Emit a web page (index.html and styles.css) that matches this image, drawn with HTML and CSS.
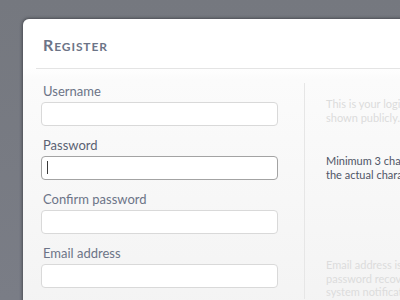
FILE: index.html
```html
<!DOCTYPE html>
<html>
<head>
<meta charset="utf-8">
<link rel="stylesheet" href="styles.css">
</head>
<body>
<div class="card">
  <h1 class="title"><span class="cap">R</span>egister</h1>
  <form class="form">
    <div class="field">
      <label class="label">Username</label>
      <input class="input" type="text">
    </div>
    <p class="help help-user">This is your login name and it will be<br>shown publicly.</p>

    <div class="field">
      <label class="label label-dark">Password</label>
      <div class="input-wrap">
        <input class="input input-focus" type="password">
        <span class="caret"></span>
      </div>
    </div>
    <p class="help help-dark help-pass">Minimum 3 characters. Only<br>the actual characters count.</p>

    <div class="field">
      <label class="label">Confirm password</label>
      <input class="input" type="password">
    </div>
    <p class="help"></p>

    <div class="field">
      <label class="label">Email address</label>
      <input class="input" type="text">
    </div>
    <p class="help help-mail">Email address is used for<br>password recovery and<br>system notifications.</p>
  </form>
</div>
</body>
</html>
```

FILE: styles.css
```css
html, body {
  margin: 0;
  padding: 0;
  height: 100%;
  overflow: hidden;
}
body {
  background: linear-gradient(#75787f, #7a7d86);
  font-family: Lato, "Open Sans", sans-serif;
}
.card {
  margin: 19px 0 0 23px;
  width: 520px;
  min-height: 340px;
  border-radius: 6px 0 0 0;
  background: linear-gradient(#ffffff 0px, #ffffff 48px, #fbfbfb 60px, #f3f3f3 300px);
  box-shadow: 0 0 3px 1px rgba(40, 42, 48, 0.55);
}
.title {
  margin: 0 0 0 13px;
  padding: 17px 0 12px 7px;
  border-bottom: 1px solid #e4e4e4;
  font-size: 12px;
  line-height: 18px;
  font-weight: 700;
  text-transform: uppercase;
  letter-spacing: 0.9px;
  color: #6c7487;
}
.cap {
  font-size: 16px;
}
.form {
  display: grid;
  grid-template-columns: 281px 1fr;
  padding-top: 14px;
  margin: 0;
}
.field {
  display: flex;
  flex-direction: column;
  padding: 0 26px 11px 18px;
  height: 43px;
}
.label {
  font-size: 13px;
  line-height: 16px;
  height: 16px;
  margin: 0 0 3px 2px;
  color: #6c7487;
}
.label-dark {
  color: #5b6273;
}
.input-wrap {
  position: relative;
}
.input {
  box-sizing: border-box;
  display: block;
  width: 237px;
  height: 24px;
  margin: 0;
  padding: 0 6px;
  border: 1px solid #d9d9d9;
  border-radius: 4px;
  background: #ffffff;
  outline: none;
}
.input-focus {
  border-color: #a3a3a3;
}
.caret {
  position: absolute;
  left: 6px;
  top: 5px;
  width: 1px;
  height: 13px;
  background: #3a3a3a;
}
.help {
  margin: 0;
  padding: 14px 0 0 21px;
  border-left: 1px solid #e6e6e6;
  font-size: 11px;
  line-height: 13.5px;
  color: #dcdcdc;
  white-space: nowrap;
  overflow: hidden;
}
.help-pass {
  padding-top: 17px;
}
.help-mail {
  padding-top: 13px;
}
.help-dark {
  color: #4f5566;
}
```
